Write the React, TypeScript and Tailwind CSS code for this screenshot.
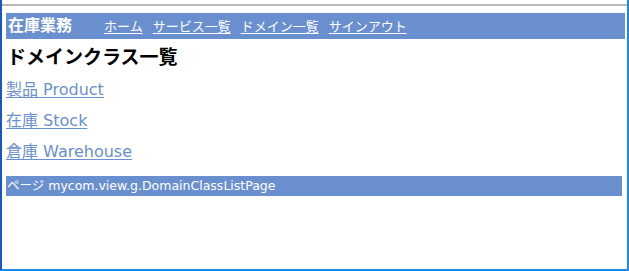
export default function App() {
  const nav = ['ホーム', 'サービス一覧', 'ドメイン一覧', 'サインアウト'];
  const items = [
    { ja: '製品', en: 'Product' },
    { ja: '在庫', en: 'Stock' },
    { ja: '倉庫', en: 'Warehouse' },
  ];

  return (
    <div
      className="w-[629px] h-[271px] bg-white border-l-2 border-l-[#1a56c4] border-r-2 border-r-[#1f8ae0] border-b-2 border-b-[#1f8ae0] overflow-hidden"
      style={{ fontFamily: 'Meiryo, "DejaVu Sans", "Noto Sans CJK JP", sans-serif' }}
    >
      <div className="mt-[4px] h-[2px] bg-[#b9b9b9]" />
      <div className="pl-[4px] pr-[2px] pt-[7px]">
        {/* header */}
        <div className="h-[26px] bg-[#6a8fcf] flex items-center pl-[2px] text-white">
          <span className="text-[16px] font-bold leading-none">在庫業務</span>
          <nav className="ml-[32px] flex gap-[10px] text-[13px] leading-none">
            {nav.map(n => (
              <a key={n} href="#" className="underline underline-offset-2">{n}</a>
            ))}
          </nav>
        </div>

        <h1 className="text-[19px] font-bold leading-none mt-[9px] pl-[1px] text-black">ドメインクラス一覧</h1>

        <ul className="mt-[13px] flex flex-col gap-[11px]">
          {items.map(i => (
            <li key={i.en} className="h-[20px] flex items-center">
              <a href="#" className="text-[16px] leading-none text-[#6a8fcf] underline underline-offset-2">
                {i.ja} {i.en}
              </a>
            </li>
          ))}
        </ul>

        <div className="mt-[14px] mr-[3px] h-[20px] bg-[#6a8fcf] flex items-center pl-[1px] text-white text-[12.5px] leading-none">
          ページ mycom.view.g.DomainClassListPage
        </div>
      </div>
    </div>
  );
}
